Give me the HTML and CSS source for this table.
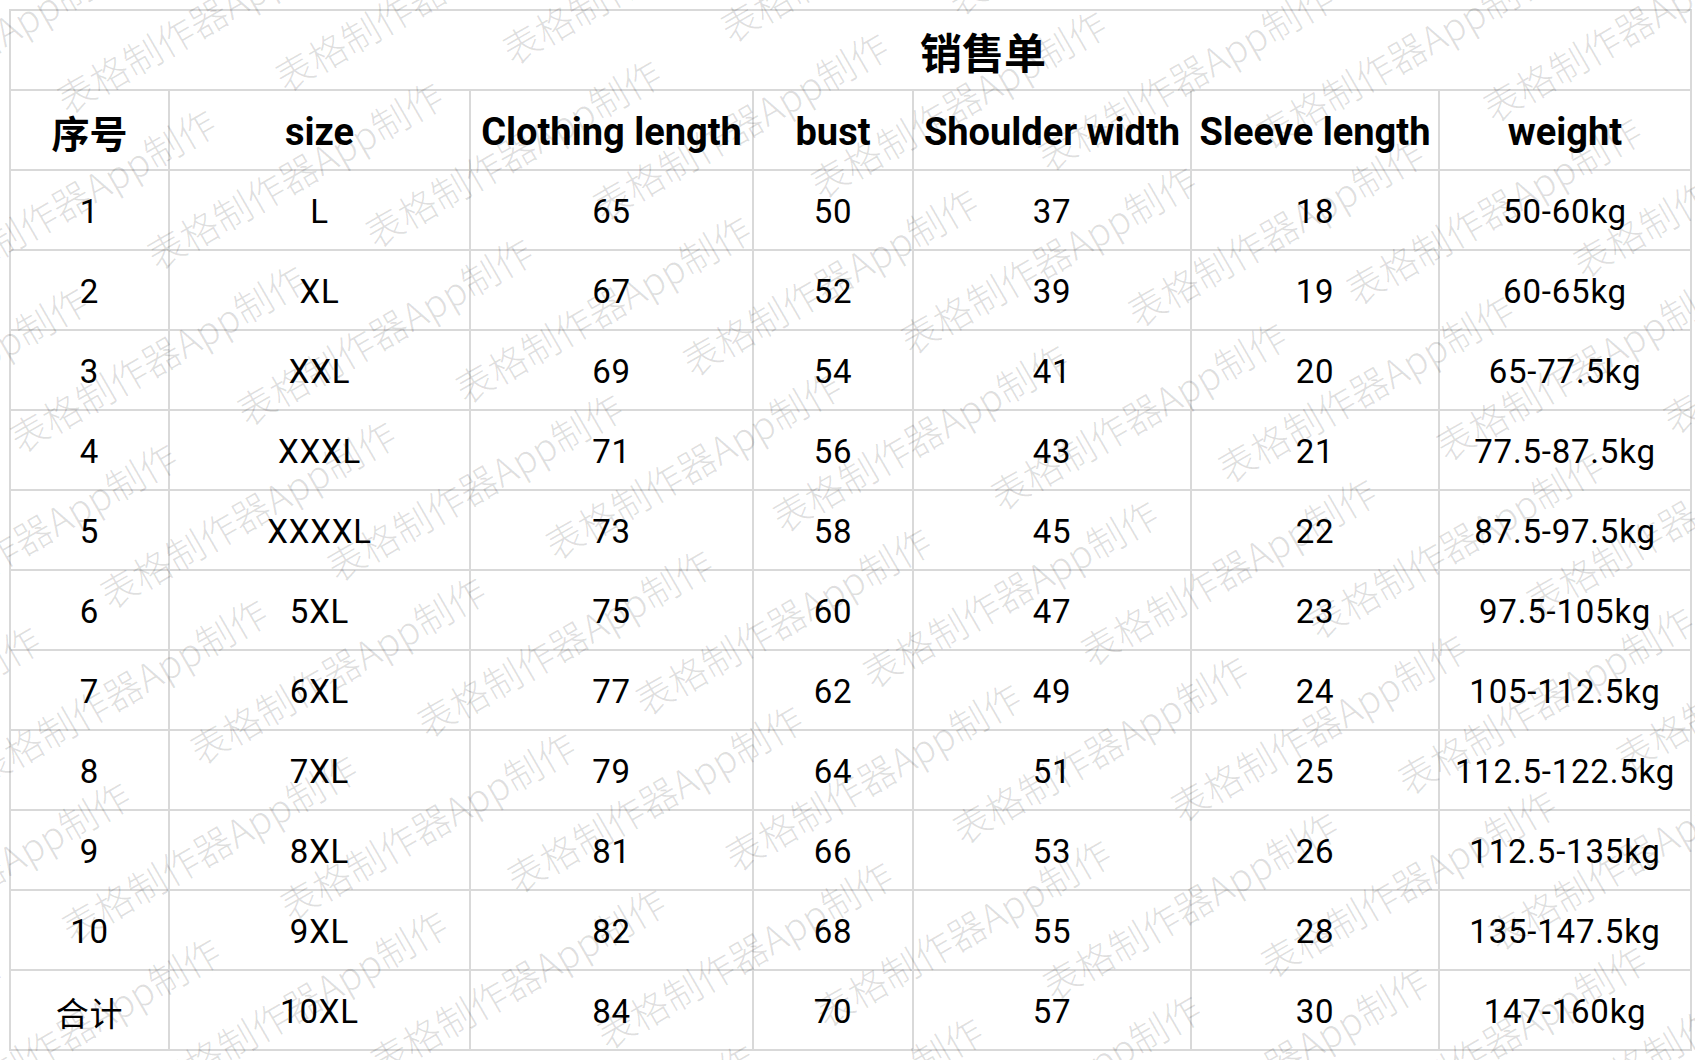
FILE: index.html
```html
<!DOCTYPE html>
<html lang="zh-CN">
<head>
<meta charset="utf-8">
<title>销售单</title>
<link rel="stylesheet" href="styles.css">
</head>
<body>
<div class="page">
  <div class="sheet">
    <div class="cell title"><span>销售单</span></div>

    <div class="cell head">序号</div>
    <div class="cell head">size</div>
    <div class="cell head">Clothing length</div>
    <div class="cell head">bust</div>
    <div class="cell head">Shoulder width</div>
    <div class="cell head">Sleeve length</div>
    <div class="cell head">weight</div>

    <div class="cell">1</div><div class="cell">L</div><div class="cell">65</div><div class="cell">50</div><div class="cell">37</div><div class="cell">18</div><div class="cell">50-60kg</div>
    <div class="cell">2</div><div class="cell">XL</div><div class="cell">67</div><div class="cell">52</div><div class="cell">39</div><div class="cell">19</div><div class="cell">60-65kg</div>
    <div class="cell">3</div><div class="cell">XXL</div><div class="cell">69</div><div class="cell">54</div><div class="cell">41</div><div class="cell">20</div><div class="cell">65-77.5kg</div>
    <div class="cell">4</div><div class="cell">XXXL</div><div class="cell">71</div><div class="cell">56</div><div class="cell">43</div><div class="cell">21</div><div class="cell">77.5-87.5kg</div>
    <div class="cell">5</div><div class="cell">XXXXL</div><div class="cell">73</div><div class="cell">58</div><div class="cell">45</div><div class="cell">22</div><div class="cell">87.5-97.5kg</div>
    <div class="cell">6</div><div class="cell">5XL</div><div class="cell">75</div><div class="cell">60</div><div class="cell">47</div><div class="cell">23</div><div class="cell">97.5-105kg</div>
    <div class="cell">7</div><div class="cell">6XL</div><div class="cell">77</div><div class="cell">62</div><div class="cell">49</div><div class="cell">24</div><div class="cell">105-112.5kg</div>
    <div class="cell">8</div><div class="cell">7XL</div><div class="cell">79</div><div class="cell">64</div><div class="cell">51</div><div class="cell">25</div><div class="cell">112.5-122.5kg</div>
    <div class="cell">9</div><div class="cell">8XL</div><div class="cell">81</div><div class="cell">66</div><div class="cell">53</div><div class="cell">26</div><div class="cell">112.5-135kg</div>
    <div class="cell">10</div><div class="cell">9XL</div><div class="cell">82</div><div class="cell">68</div><div class="cell">55</div><div class="cell">28</div><div class="cell">135-147.5kg</div>
    <div class="cell">合计</div><div class="cell">10XL</div><div class="cell">84</div><div class="cell">70</div><div class="cell">57</div><div class="cell">30</div><div class="cell">147-160kg</div>
  </div>

  <div class="watermark" aria-hidden="true">
    <div class="wm-layer">
      <div class="wm-row">表格制作器App制作　　表格制作器App制作　　表格制作器App制作　　表格制作器App制作　　表格制作器App制作　　表格制作器App制作　　表格制作器App制作　　表格制作器App制作</div>
      <div class="wm-row">表格制作器App制作　　表格制作器App制作　　表格制作器App制作　　表格制作器App制作　　表格制作器App制作　　表格制作器App制作　　表格制作器App制作　　表格制作器App制作</div>
      <div class="wm-row">表格制作器App制作　　表格制作器App制作　　表格制作器App制作　　表格制作器App制作　　表格制作器App制作　　表格制作器App制作　　表格制作器App制作　　表格制作器App制作</div>
      <div class="wm-row">表格制作器App制作　　表格制作器App制作　　表格制作器App制作　　表格制作器App制作　　表格制作器App制作　　表格制作器App制作　　表格制作器App制作　　表格制作器App制作</div>
      <div class="wm-row">表格制作器App制作　　表格制作器App制作　　表格制作器App制作　　表格制作器App制作　　表格制作器App制作　　表格制作器App制作　　表格制作器App制作　　表格制作器App制作</div>
      <div class="wm-row">表格制作器App制作　　表格制作器App制作　　表格制作器App制作　　表格制作器App制作　　表格制作器App制作　　表格制作器App制作　　表格制作器App制作　　表格制作器App制作</div>
      <div class="wm-row">表格制作器App制作　　表格制作器App制作　　表格制作器App制作　　表格制作器App制作　　表格制作器App制作　　表格制作器App制作　　表格制作器App制作　　表格制作器App制作</div>
      <div class="wm-row">表格制作器App制作　　表格制作器App制作　　表格制作器App制作　　表格制作器App制作　　表格制作器App制作　　表格制作器App制作　　表格制作器App制作　　表格制作器App制作</div>
      <div class="wm-row">表格制作器App制作　　表格制作器App制作　　表格制作器App制作　　表格制作器App制作　　表格制作器App制作　　表格制作器App制作　　表格制作器App制作　　表格制作器App制作</div>
      <div class="wm-row">表格制作器App制作　　表格制作器App制作　　表格制作器App制作　　表格制作器App制作　　表格制作器App制作　　表格制作器App制作　　表格制作器App制作　　表格制作器App制作</div>
      <div class="wm-row">表格制作器App制作　　表格制作器App制作　　表格制作器App制作　　表格制作器App制作　　表格制作器App制作　　表格制作器App制作　　表格制作器App制作　　表格制作器App制作</div>
      <div class="wm-row">表格制作器App制作　　表格制作器App制作　　表格制作器App制作　　表格制作器App制作　　表格制作器App制作　　表格制作器App制作　　表格制作器App制作　　表格制作器App制作</div>
      <div class="wm-row">表格制作器App制作　　表格制作器App制作　　表格制作器App制作　　表格制作器App制作　　表格制作器App制作　　表格制作器App制作　　表格制作器App制作　　表格制作器App制作</div>
      <div class="wm-row">表格制作器App制作　　表格制作器App制作　　表格制作器App制作　　表格制作器App制作　　表格制作器App制作　　表格制作器App制作　　表格制作器App制作　　表格制作器App制作</div>
      <div class="wm-row">表格制作器App制作　　表格制作器App制作　　表格制作器App制作　　表格制作器App制作　　表格制作器App制作　　表格制作器App制作　　表格制作器App制作　　表格制作器App制作</div>
      <div class="wm-row">表格制作器App制作　　表格制作器App制作　　表格制作器App制作　　表格制作器App制作　　表格制作器App制作　　表格制作器App制作　　表格制作器App制作　　表格制作器App制作</div>
      <div class="wm-row">表格制作器App制作　　表格制作器App制作　　表格制作器App制作　　表格制作器App制作　　表格制作器App制作　　表格制作器App制作　　表格制作器App制作　　表格制作器App制作</div>
      <div class="wm-row">表格制作器App制作　　表格制作器App制作　　表格制作器App制作　　表格制作器App制作　　表格制作器App制作　　表格制作器App制作　　表格制作器App制作　　表格制作器App制作</div>
      <div class="wm-row">表格制作器App制作　　表格制作器App制作　　表格制作器App制作　　表格制作器App制作　　表格制作器App制作　　表格制作器App制作　　表格制作器App制作　　表格制作器App制作</div>
      <div class="wm-row">表格制作器App制作　　表格制作器App制作　　表格制作器App制作　　表格制作器App制作　　表格制作器App制作　　表格制作器App制作　　表格制作器App制作　　表格制作器App制作</div>
      <div class="wm-row">表格制作器App制作　　表格制作器App制作　　表格制作器App制作　　表格制作器App制作　　表格制作器App制作　　表格制作器App制作　　表格制作器App制作　　表格制作器App制作</div>
      <div class="wm-row">表格制作器App制作　　表格制作器App制作　　表格制作器App制作　　表格制作器App制作　　表格制作器App制作　　表格制作器App制作　　表格制作器App制作　　表格制作器App制作</div>
      <div class="wm-row">表格制作器App制作　　表格制作器App制作　　表格制作器App制作　　表格制作器App制作　　表格制作器App制作　　表格制作器App制作　　表格制作器App制作　　表格制作器App制作</div>
      <div class="wm-row">表格制作器App制作　　表格制作器App制作　　表格制作器App制作　　表格制作器App制作　　表格制作器App制作　　表格制作器App制作　　表格制作器App制作　　表格制作器App制作</div>
    </div>
  </div>
</div>
</body>
</html>
```

FILE: styles.css
```css
html, body {
  margin: 0;
  padding: 0;
  background: #ffffff;
}

.page {
  position: relative;
  width: 1695px;
  height: 1060px;
  overflow: hidden;
  padding: 9px 0 0 9px;
  box-sizing: border-box;
  font-family: "Roboto", "Noto Sans CJK SC", sans-serif;
  color: #000000;
}

.sheet {
  display: grid;
  grid-template-columns: 157px 299px 281px 158px 276px 246px 250px;
  grid-auto-rows: 78px;
  gap: 2px;
  padding: 2px;
  width: max-content;
  background: #d9d9d9;
}

.cell {
  background: #ffffff;
  display: flex;
  align-items: center;
  justify-content: center;
  padding-top: 3px;
  box-sizing: border-box;
  font-size: 33px;
  letter-spacing: 0.8px;
  white-space: nowrap;
}

.title {
  grid-column: 1 / -1;
  padding-top: 0;
  padding-left: 265px;
  font-family: "Noto Sans CJK SC", sans-serif;
  font-size: 42px;
  font-weight: 700;
  letter-spacing: 0;
}

.head {
  font-size: 38px;
  font-weight: 700;
  letter-spacing: 0;
}

.watermark {
  position: absolute;
  inset: 0;
  overflow: hidden;
  pointer-events: none;
}

.wm-layer {
  position: absolute;
  left: 50%;
  top: 50%;
  width: 3000px;
  height: 2160px;
  margin-left: -1500px;
  margin-top: -1080px;
  transform: rotate(-30deg);
  display: flex;
  flex-direction: column;
  font-family: "Noto Sans CJK SC", sans-serif;
  font-weight: 300;
  font-size: 38px;
  line-height: 90px;
  color: rgba(0, 0, 0, 0.13);
  white-space: nowrap;
}

.wm-row:nth-child(even) {
  margin-left: -200px;
}
```
